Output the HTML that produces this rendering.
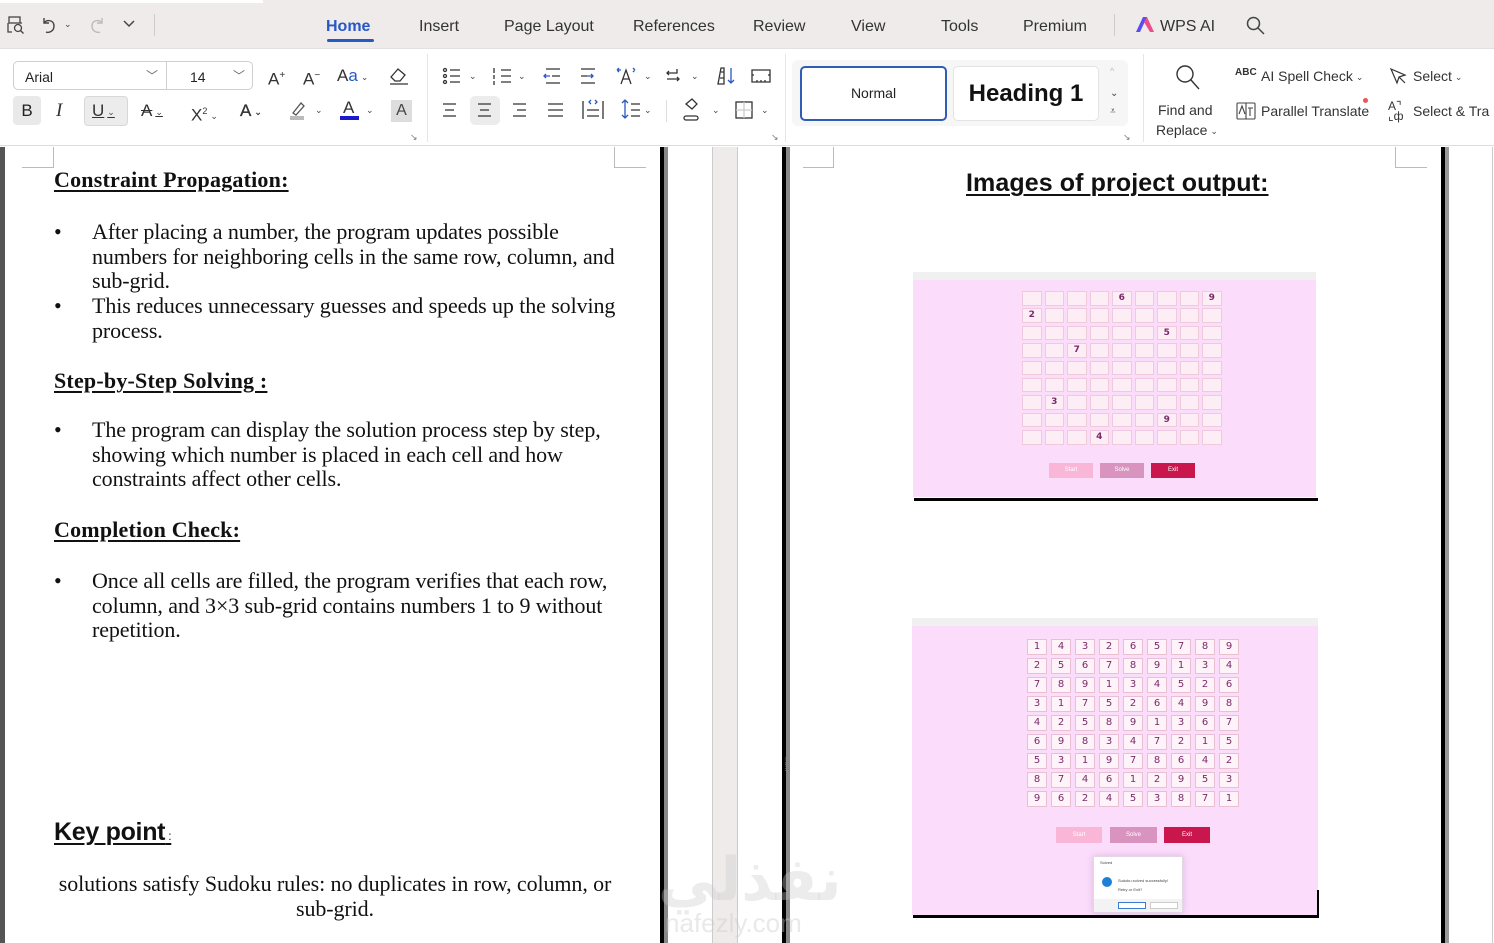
<!DOCTYPE html>
<html><head><meta charset="utf-8"><style>
*{margin:0;padding:0;box-sizing:border-box}
body{width:1494px;height:943px;overflow:hidden;position:relative;background:#fff;font-family:"Liberation Sans",sans-serif;color:#222}
.a{position:absolute}
.tab{position:absolute;top:18px;font-size:16px;color:#333}
.ic{position:absolute;font-size:17px;color:#333;line-height:20px}
.dd{font-size:9px;color:#444;margin-left:3px;vertical-align:middle}
.doc{font-family:"Liberation Serif",serif;color:#111;font-size:22px;letter-spacing:-0.1px;line-height:24.5px;white-space:nowrap}
.h{font-weight:bold;text-decoration:underline;text-decoration-thickness:2px;text-underline-offset:3px}
.g1{position:absolute;display:grid;grid-template-columns:repeat(9,19.5px);column-gap:3px;grid-template-rows:repeat(9,14.5px);row-gap:2.9px}
.g1 div{background:#fdeef6;border:1px solid #efc9dc;font:bold 9px "DejaVu Sans",sans-serif;color:#7a2a6a;text-align:center;line-height:12px}
.g2{position:absolute;display:grid;grid-template-columns:repeat(9,20px);column-gap:4px;grid-template-rows:repeat(9,16px);row-gap:3px}
.g2 div{background:#fdf3f8;border:1px solid #e9bfd3;font:10px "DejaVu Sans",sans-serif;color:#7a2a6a;text-align:center;line-height:14px}
.btn{position:absolute;color:#fff;font-size:6px;text-align:center}
</style></head><body>
<div class="a" style="left:0;top:0;width:1494px;height:48px;background:#efebeb"></div>
<div class="a" style="left:0;top:0;width:263px;height:3px;background:#fff"></div>
<svg class="a" style="left:6px;top:15px" width="20" height="20" viewBox="0 0 20 20" fill="none" stroke="#444" stroke-width="1.3"><rect x="3" y="2" width="11" height="6"/><path d="M2 8v9h4M14 8h2"/><circle cx="12" cy="13" r="3.5"/><path d="M14.5 15.5l3 3"/></svg>
<svg class="a" style="left:38px;top:15px" width="20" height="20" viewBox="0 0 20 20" fill="none" stroke="#444" stroke-width="1.4"><path d="M6 3v5h5"/><path d="M6 8c3-4 10-3 10 3s-6 7-8 6"/></svg>
<span class="a dd" style="left:61px;top:19px">⌄</span>
<svg class="a" style="left:88px;top:15px" width="20" height="20" viewBox="0 0 20 20" fill="none" stroke="#bbb" stroke-width="1.4"><path d="M14 3v5H9"/><path d="M14 8c-3-4-10-3-10 3s6 7 8 6"/></svg>
<svg class="a" style="left:122px;top:19px" width="14" height="10" viewBox="0 0 14 10" fill="none" stroke="#444" stroke-width="1.5"><path d="M2 2l5 5 5-5"/></svg>
<div class="a" style="left:154px;top:14px;width:1px;height:22px;background:#ccc"></div>
<div class="tab" style="left:326px;color:#2758c5;font-weight:bold">Home</div>
<div class="a" style="left:327px;top:39px;width:47px;height:3px;background:#2758c5;border-radius:2px"></div>
<div class="tab" style="left:419px">Insert</div>
<div class="tab" style="left:504px">Page Layout</div>
<div class="tab" style="left:633px">References</div>
<div class="tab" style="left:753px">Review</div>
<div class="tab" style="left:851px">View</div>
<div class="tab" style="left:941px">Tools</div>
<div class="tab" style="left:1023px">Premium</div>
<div class="a" style="left:1114px;top:14px;width:1px;height:22px;background:#ccc"></div>
<svg class="a" style="left:1135px;top:16px" width="20" height="17" viewBox="0 0 20 17"><path d="M1 16L8 1h4L5 16z" fill="#5b4cf0"/><path d="M9 6l3-5 7 15h-4z" fill="#ea4f8a"/></svg>
<div class="tab" style="left:1160px">WPS AI</div>
<svg class="a" style="left:1245px;top:15px" width="22" height="22" viewBox="0 0 22 22" fill="none" stroke="#444" stroke-width="1.5"><circle cx="8.5" cy="8.5" r="6"/><path d="M13 13l6 6"/></svg>

<div class="a" style="left:0;top:48px;width:1494px;height:98px;background:#fff;border-top:1px solid #e3e0e0;border-bottom:1px solid #ddd"></div>
<div class="a" style="left:13px;top:61px;width:153px;height:29px;border:1px solid #cfcfcf;border-right:none;border-radius:5px 0 0 5px;font-size:14px;padding:7px 11px">Arial<span style="position:absolute;right:8px;top:5px;font-size:12px;color:#666">﹀</span></div>
<div class="a" style="left:166px;top:61px;width:87px;height:29px;border:1px solid #cfcfcf;border-radius:0 5px 5px 0;font-size:14px;padding:7px 10px 0 23px">14<span style="position:absolute;right:7px;top:5px;font-size:12px;color:#666">﹀</span></div>
<div class="ic" style="left:268px;top:66px">A<sup style="font-size:10px">+</sup></div>
<div class="ic" style="left:303px;top:66px">A<sup style="font-size:10px">−</sup></div>
<div class="ic" style="left:337px;top:66px">A<span style="color:#2758c5">a</span><span class="dd">⌄</span></div>
<svg class="a" style="left:388px;top:66px" width="22" height="20" viewBox="0 0 22 20" fill="none" stroke="#333" stroke-width="1.3"><path d="M3 11l7-8 7 6-5 6H7z"/><path d="M2 18h18"/></svg>
<div class="a" style="left:13px;top:96px;width:28px;height:29px;background:#e9e9e9;border-radius:4px;font-size:17px;text-align:center;line-height:29px">B</div>
<div class="ic" style="left:56px;top:101px;font-family:'Liberation Serif',serif;font-style:italic;font-size:19px">I</div>
<div class="a" style="left:84px;top:96px;width:44px;height:30px;background:#ececec;border:1px solid #d8d8d8;border-radius:4px"></div>
<div class="ic" style="left:92px;top:101px;text-decoration:underline">U<span class="dd">⌄</span></div>
<div class="ic" style="left:141px;top:101px;text-decoration:line-through">A<span class="dd">⌄</span></div>
<div class="ic" style="left:191px;top:101px">X<sup style="font-size:9px">2</sup><span class="dd">⌄</span></div>
<div class="ic" style="left:240px;top:101px;color:#333;-webkit-text-stroke:0.3px #333">A<span class="dd">⌄</span></div>
<svg class="a" style="left:289px;top:99px" width="22" height="22" viewBox="0 0 22 22" fill="none" stroke="#555" stroke-width="1.3"><path d="M4 14l8-10 3 3-8 9z"/><rect x="1" y="17" width="14" height="4" fill="#bbb" stroke="none"/></svg><span class="a dd" style="left:312px;top:105px">⌄</span>
<div class="ic" style="left:343px;top:98px">A</div><div class="a" style="left:340px;top:116px;width:19px;height:4px;background:#1a1acc"></div><span class="a dd" style="left:363px;top:105px">⌄</span>
<div class="a" style="left:391px;top:100px;width:21px;height:22px;background:#ddd;font-size:16px;text-align:center;line-height:22px;color:#444">A</div>
<div class="a" style="left:410px;top:132px;font-size:9px;color:#777">↘</div>
<div class="a" style="left:427px;top:54px;width:1px;height:88px;background:#e6e6e6"></div>
<div class="a" style="left:470px;top:96px;width:30px;height:29px;background:#ececec;border-radius:5px"></div>
<svg class="a" style="left:441px;top:66px" width="340" height="60" viewBox="0 0 340 60" fill="none" stroke="#333" stroke-width="1.3">
<circle cx="4" cy="4" r="1.5"/><circle cx="4" cy="10" r="1.5"/><circle cx="4" cy="16" r="1.5"/><path d="M9 4h10M9 10h10M9 16h10"/>
<path d="M60 4h10M60 10h10M60 16h10M53 2v5M53 9v4M53 15v4"/>
<path d="M105 3h14M105 17h14M111 10h8" /><path d="M103 10h6M105 8l-2 2 2 2" stroke="#2758c5"/>
<path d="M140 3h14M140 17h14M140 10h6"/><path d="M146 10h6M150 8l2 2-2 2" stroke="#2758c5"/>
<path d="M180 18l5-14 5 14M182 13h6"/><path d="M176 4l2-2M176 4l2 2M176 4h4M194 4l-2-2M194 4l-2 2" stroke="#2758c5"/>
<path d="M236 3v4h-10M228 5l-2 2 2 2M226 13h12M236 11l2 2-2 2"/>
<path d="M277 18l3-16h3v16zM280 6h3M279 12h4"/><path d="M290 2v15M287 14l3 3 3-3" stroke="#2758c5"/>
<path d="M311 4h18v12h-18zM311 9h2M327 9h2M316 14v2M320 14v2M324 14v2"/>
<path d="M2 38h13M4 44h9M2 50h13"/>
<path d="M37 38h13M39 44h9M37 50h13"/>
<path d="M72 38h13M76 44h9M72 50h13"/>
<path d="M107 38h15M107 44h15M107 50h15"/>
<path d="M142 35v18M162 35v18M146 44h12M146 50h12"/><path d="M150 38l-2-2 2-2M154 38l2-2-2-2" stroke="#2758c5"/>
<path d="M184 34v18M181 37l3-3 3 3M181 49l3 3 3-3" stroke="#2758c5"/><path d="M190 38h9M190 44h9M190 50h9"/>
<path d="M245 38l6-5 5 5-5 5z"/><rect x="243" y="50" width="14" height="4" rx="2"/>
<rect x="295" y="36" width="16" height="16"/><path d="M303 36v16M295 44h16" stroke="#ccc"/>
</svg>
<span class="a dd" style="left:466px;top:71px">⌄</span><span class="a dd" style="left:515px;top:71px">⌄</span><span class="a dd" style="left:641px;top:71px">⌄</span><span class="a dd" style="left:688px;top:71px">⌄</span><span class="a dd" style="left:641px;top:105px">⌄</span><span class="a dd" style="left:709px;top:105px">⌄</span><span class="a dd" style="left:758px;top:105px">⌄</span>
<div class="a" style="left:666px;top:100px;width:1px;height:22px;background:#ddd"></div>
<div class="a" style="left:771px;top:132px;font-size:9px;color:#777">↘</div>
<div class="a" style="left:785px;top:54px;width:1px;height:88px;background:#e6e6e6"></div>
<div class="a" style="left:792px;top:60px;width:336px;height:66px;background:#f6f6f6;border-radius:6px"></div>
<div class="a" style="left:800px;top:66px;width:147px;height:55px;background:#fff;border:2px solid #2f5db5;border-radius:5px;font-size:14px;text-align:center;line-height:51px">Normal</div>
<div class="a" style="left:953px;top:66px;width:146px;height:55px;background:#fff;border:1px solid #e3e3e3;border-radius:5px;font-size:24px;font-weight:bold;text-align:center;line-height:53px;color:#111">Heading 1</div>
<div class="a" style="left:1110px;top:66px;font-size:9px;color:#bbb">^</div>
<div class="a" style="left:1110px;top:88px;font-size:10px;color:#444">⌄</div>
<div class="a" style="left:1110px;top:106px;font-size:10px;color:#444">⩡</div>
<div class="a" style="left:1123px;top:132px;font-size:9px;color:#777">↘</div>
<div class="a" style="left:1143px;top:54px;width:1px;height:88px;background:#e6e6e6"></div>
<svg class="a" style="left:1173px;top:63px" width="30" height="30" viewBox="0 0 30 30" fill="none" stroke="#333" stroke-width="1.4"><circle cx="12" cy="11" r="8"/><path d="M18 17l8 9"/></svg>
<div class="a" style="left:1158px;top:102px;font-size:14px;color:#333">Find and</div>
<div class="a" style="left:1156px;top:122px;font-size:14px;color:#333">Replace<span class="dd">⌄</span></div>
<div class="a" style="left:1235px;top:67px;font-size:10px;font-weight:bold;color:#333">ABC</div>
<div class="a" style="left:1261px;top:68px;font-size:14px;color:#333">AI Spell Check<span class="dd">⌄</span></div>
<svg class="a" style="left:1236px;top:101px" width="20" height="20" viewBox="0 0 20 20" fill="none" stroke="#444" stroke-width="1.1"><rect x="1" y="2" width="18" height="16" rx="1"/><path d="M10 2v16M3 13l3-8 3 8"/><path d="M12 7h5M14 7v8"/></svg>
<div class="a" style="left:1261px;top:103px;font-size:14px;color:#333">Parallel Translate</div>
<div class="a" style="left:1363px;top:98px;width:5px;height:5px;border-radius:50%;background:#e55"></div>
<svg class="a" style="left:1388px;top:66px" width="20" height="20" viewBox="0 0 20 20" fill="none" stroke="#333" stroke-width="1.2"><path d="M3 3l14 6-6 2-2 6z"/><path d="M11 11l6 6"/></svg>
<div class="a" style="left:1413px;top:68px;font-size:14px;color:#333">Select<span class="dd">⌄</span></div>
<div class="a" style="left:1388px;top:101px;font-size:12px;color:#333;line-height:10px">A⌝<br>⌞ф</div>
<div class="a" style="left:1413px;top:103px;font-size:14px;color:#333;white-space:nowrap">Select &amp; Tra</div>

<div class="a" style="left:0;top:147px;width:5px;height:796px;background:#555"></div>
<div class="a" style="left:660px;top:147px;width:4px;height:796px;background:#000"></div>
<div class="a" style="left:664px;top:147px;width:4px;height:796px;background:#888"></div>
<div class="a" style="left:712px;top:147px;width:26px;height:796px;background:#efebeb;border-left:1px solid #ccc;border-right:1px solid #ccc"></div>
<div class="a" style="left:782px;top:147px;width:4px;height:796px;background:#000"></div>
<div class="a" style="left:786px;top:147px;width:4px;height:796px;background:#888"></div>
<div class="a" style="left:1441px;top:147px;width:4px;height:796px;background:#000"></div>
<div class="a" style="left:1445px;top:147px;width:4px;height:796px;background:#999"></div>
<div class="a" style="left:1492px;top:147px;width:1px;height:796px;background:#ccc"></div>
<div class="a" style="left:22px;top:147px;width:32px;height:21px;border-right:1px solid #bbb;border-bottom:1px solid #bbb"></div>
<div class="a" style="left:614px;top:147px;width:32px;height:21px;border-left:1px solid #bbb;border-bottom:1px solid #bbb"></div>
<div class="a" style="left:803px;top:147px;width:31px;height:21px;border-right:1px solid #bbb;border-bottom:1px solid #bbb"></div>
<div class="a" style="left:1395px;top:147px;width:32px;height:21px;border-left:1px solid #bbb;border-bottom:1px solid #bbb"></div>

<div class="doc">
<div class="a h" style="left:54px;top:168px;letter-spacing:0.2px">Constraint Propagation:</div>
<div class="a" style="left:54px;top:220px">•</div>
<div class="a" style="left:92px;top:220px">After placing a number, the program updates possible<br>numbers for neighboring cells in the same row, column, and<br>sub-grid.</div>
<div class="a" style="left:54px;top:294px">•</div>
<div class="a" style="left:92px;top:294px">This reduces unnecessary guesses and speeds up the solving<br>process.</div>
<div class="a h" style="left:54px;top:369px;letter-spacing:0.2px">Step-by-Step Solving :</div>
<div class="a" style="left:54px;top:418px">•</div>
<div class="a" style="left:92px;top:418px">The program can display the solution process step by step,<br>showing which number is placed in each cell and how<br>constraints affect other cells.</div>
<div class="a h" style="left:54px;top:518px;letter-spacing:0.2px">Completion Check:</div>
<div class="a" style="left:54px;top:569px">•</div>
<div class="a" style="left:92px;top:569px">Once all cells are filled, the program verifies that each row,<br>column, and 3×3 sub-grid contains numbers 1 to 9 without<br>repetition.</div>
<div class="a" style="left:54px;top:820px;font-family:'Liberation Sans',sans-serif;font-weight:bold;font-size:25px;letter-spacing:-0.3px;text-decoration:underline;text-underline-offset:3px;text-decoration-thickness:2px">Key point<span style="font-size:12px;font-weight:normal;text-decoration:none"> :</span></div>
<div class="a" style="left:20px;top:872px;width:630px;text-align:center">solutions satisfy Sudoku rules: no duplicates in row, column, or<br>sub-grid.</div>
</div>

<div class="a" style="left:966px;top:169px;font-size:25px;font-weight:bold;letter-spacing:0.1px;text-decoration:underline;text-underline-offset:3px;text-decoration-thickness:2px;color:#111">Images of project output:</div>

<div class="a" style="left:913px;top:272px;width:403px;height:225px;background:#fbdcfb;border-top:8px solid #f0f0f0"></div>
<div class="a" style="left:914px;top:498px;width:404px;height:3px;background:#000"></div>
<div class="g1" style="left:1022px;top:291px">
<div></div><div></div><div></div><div></div><div>6</div><div></div><div></div><div></div><div>9</div>
<div>2</div><div></div><div></div><div></div><div></div><div></div><div></div><div></div><div></div>
<div></div><div></div><div></div><div></div><div></div><div></div><div>5</div><div></div><div></div>
<div></div><div></div><div>7</div><div></div><div></div><div></div><div></div><div></div><div></div>
<div></div><div></div><div></div><div></div><div></div><div></div><div></div><div></div><div></div>
<div></div><div></div><div></div><div></div><div></div><div></div><div></div><div></div><div></div>
<div></div><div>3</div><div></div><div></div><div></div><div></div><div></div><div></div><div></div>
<div></div><div></div><div></div><div></div><div></div><div></div><div>9</div><div></div><div></div>
<div></div><div></div><div></div><div>4</div><div></div><div></div><div></div><div></div><div></div>
</div>
<div class="btn" style="left:1049px;top:463px;width:44px;height:15px;background:#f9b6d6;line-height:15px">Start</div>
<div class="btn" style="left:1100px;top:463px;width:44px;height:15px;background:#d993bf;line-height:15px">Solve</div>
<div class="btn" style="left:1151px;top:463px;width:44px;height:15px;background:#c9174d;line-height:15px">Exit</div>

<div class="a" style="left:912px;top:618px;width:406px;height:297px;background:#fbdcfb;border-top:8px solid #f0f0f0"></div>
<div class="a" style="left:913px;top:915px;width:406px;height:3px;background:#000"></div>
<div class="a" style="left:1317px;top:890px;width:2px;height:28px;background:#000"></div>
<div class="g2" style="left:1027px;top:639px">
<div>1</div><div>4</div><div>3</div><div>2</div><div>6</div><div>5</div><div>7</div><div>8</div><div>9</div>
<div>2</div><div>5</div><div>6</div><div>7</div><div>8</div><div>9</div><div>1</div><div>3</div><div>4</div>
<div>7</div><div>8</div><div>9</div><div>1</div><div>3</div><div>4</div><div>5</div><div>2</div><div>6</div>
<div>3</div><div>1</div><div>7</div><div>5</div><div>2</div><div>6</div><div>4</div><div>9</div><div>8</div>
<div>4</div><div>2</div><div>5</div><div>8</div><div>9</div><div>1</div><div>3</div><div>6</div><div>7</div>
<div>6</div><div>9</div><div>8</div><div>3</div><div>4</div><div>7</div><div>2</div><div>1</div><div>5</div>
<div>5</div><div>3</div><div>1</div><div>9</div><div>7</div><div>8</div><div>6</div><div>4</div><div>2</div>
<div>8</div><div>7</div><div>4</div><div>6</div><div>1</div><div>2</div><div>9</div><div>5</div><div>3</div>
<div>9</div><div>6</div><div>2</div><div>4</div><div>5</div><div>3</div><div>8</div><div>7</div><div>1</div>
</div>
<div class="btn" style="left:1056px;top:827px;width:46px;height:16px;background:#f9b6d6;line-height:16px">Start</div>
<div class="btn" style="left:1110px;top:827px;width:47px;height:16px;background:#d993bf;line-height:16px">Solve</div>
<div class="btn" style="left:1164px;top:827px;width:46px;height:16px;background:#c9174d;line-height:16px">Exit</div>
<div class="a" style="left:1093px;top:856px;width:90px;height:57px;background:#fff;border:1px solid #e4d6e4;box-shadow:0 0 6px rgba(150,100,150,.3)">
<div style="font-size:4px;padding:3px 6px;color:#444">Solved</div>
<div style="position:absolute;left:8px;top:20px;width:10px;height:10px;border-radius:50%;background:#1e7fd6"></div>
<div style="position:absolute;left:24px;top:19px;font-size:4px;color:#444;line-height:9px">Sudoku solved successfully!<br>Retry or Exit?</div>
<div style="position:absolute;left:0;bottom:0;width:100%;height:13px;background:#f3f3f3"></div>
<div style="position:absolute;left:24px;bottom:3px;width:28px;height:7px;border:1px solid #3a7bd5;background:#fff"></div>
<div style="position:absolute;left:56px;bottom:3px;width:28px;height:7px;border:1px solid #ccc;background:#fff"></div>
</div>
<div class="a" style="left:784px;top:760px;font-size:10px;color:#555;line-height:6px">⁞<br>⁞</div>
<div class="a" style="left:658px;top:845px;font-size:60px;font-weight:bold;color:rgba(200,200,200,.35);font-family:'DejaVu Sans',sans-serif">نفذلي</div>
<div class="a" style="left:665px;top:908px;font-size:26px;color:rgba(200,200,200,.4)">nafezly.com</div>
</body></html>
